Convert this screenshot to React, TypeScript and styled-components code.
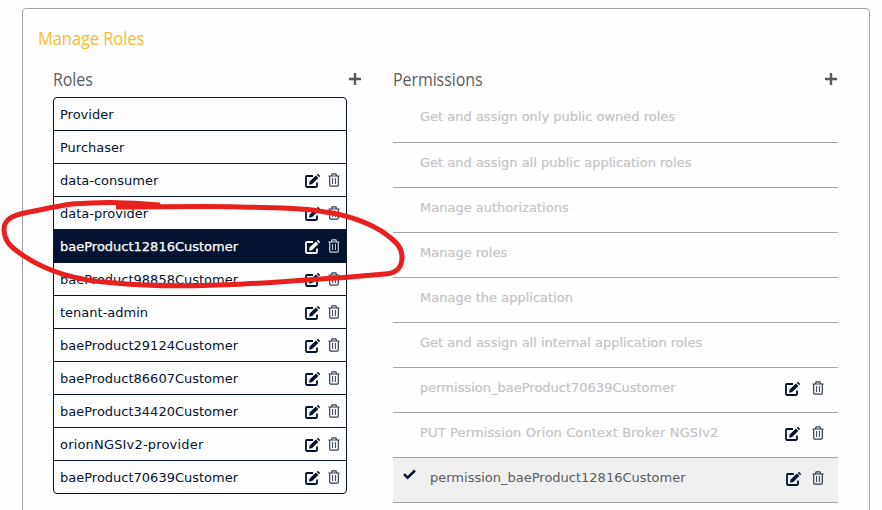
import React from "react";
import styled, { createGlobalStyle, css } from "styled-components";

const GlobalStyle = createGlobalStyle`
  html, body { margin: 0; height: 100%; overflow: hidden; background: #fff; }
  * { box-sizing: border-box; }
`;

const Page = styled.div`
  position: relative;
  height: 510px;
  overflow: hidden;
  padding: 8px 12px 0 22px;
  background: #fefefe;
  font-family: "DejaVu Sans", Verdana, sans-serif;
  font-size: 13px;
`;

const Panel = styled.main`
  height: 560px;
  border: 1px solid #a5a5a5;
  border-radius: 4px;
  padding: 17px 31px 0 15px;
`;

const headingFont = css`
  margin: 0;
  font: 400 18px/24px "Open Sans", sans-serif;
  letter-spacing: -0.1px;
  transform-origin: left center;
`;

const Title = styled.h1`
  ${headingFont}
  height: 24px;
  color: #fdb92a;
  transform: scaleX(0.918);
`;

const Columns = styled.div`
  display: grid;
  grid-template-columns: 294px 445px;
  column-gap: 46px;
  padding: 17px 0 0 15px;
`;

const ColumnHeader = styled.header<{ $overhang?: number }>`
  display: flex;
  justify-content: space-between;
  align-items: center;
  height: 24px;
  margin-right: ${(p) => -(p.$overhang ?? 0)}px;
`;

const Heading = styled.h2`
  ${headingFont}
  color: #5b5b5f;
  transform: scaleX(0.89);
`;

const IconButton = styled.button`
  display: block;
  padding: 0;
  border: 0;
  background: none;
  color: inherit;
  line-height: 0;
`;

const AddButton = styled(IconButton)`
  color: #57575f;
  margin-right: 1px;
`;

const RoleList = styled.ul`
  list-style: none;
  margin: 6px 0 0;
  padding: 0;
  border: 1px solid #04132f;
  border-radius: 4px;
  overflow: hidden;
`;

const RoleRow = styled.li<{ $selected?: boolean }>`
  display: flex;
  align-items: center;
  justify-content: space-between;
  height: 33px;
  padding: 0 6px 0 6px;
  border-bottom: 1px solid #04132f;
  color: #04132f;
  &:last-child { border-bottom: 0; height: 32px; }
  ${(p) => p.$selected && css`
    background: #04132f;
    color: #fff;
    -webkit-text-stroke: 0.25px #fff;
  `}
`;

const Label = styled.span<{ $tracking?: number }>`
  white-space: nowrap;
  letter-spacing: ${(p) => p.$tracking ?? 0}px;
`;

const Actions = styled.span<{ $gap: number }>`
  display: flex;
  align-items: center;
  gap: ${(p) => p.$gap}px;
  color: inherit;
`;

const PermissionList = styled.ul`
  list-style: none;
  margin: 4px 0 0;
  padding: 0;
`;

const PermissionRow = styled.li<{ $checked?: boolean }>`
  display: flex;
  justify-content: space-between;
  height: 45px;
  padding: 10px 14px 0 27px;
  line-height: 20px;
  border-bottom: 1px solid #a5a5a5;
  color: #c4c4c6;
  -webkit-text-stroke: 0.2px currentColor;
  &:first-child { height: 48px; padding-top: 12px; }
  ${(p) => p.$checked && css`
    background: #f0f0f0;
    color: #5b5b5f;
    padding-left: 10px;
    -webkit-text-stroke: 0;
  `}
  ${Actions} { height: 20px; color: #04132f; }
`;

const PermissionName = styled.span`
  display: flex;
  gap: 14px;
  svg { color: #04132f; margin-top: 1px; }
`;

const Annotation = styled.svg`
  position: absolute;
  left: 0;
  top: 0;
  pointer-events: none;
`;

const PlusIcon = () => (
  <svg width="12" height="12" viewBox="0 0 12 12" fill="currentColor">
    <path d="M4.8 0h2.4v4.8H12v2.4H7.2V12H4.8V7.2H0V4.8h4.8z" />
  </svg>
);

const EditIcon = () => (
  <svg width="15" height="15" viewBox="0 -1 15 15">
    <path d="M8 2H1.9Q1 2 1 2.9v9.2q0 .9.9.9h9.2q.9 0 .9-.9V8.6" fill="none" stroke="currentColor" strokeWidth="1.8" />
    <path d="M10.9 1.4l2.5 2.5-6.2 6.2-3.1.6.5-3.2zM11.8.9l.6-.6q.5-.5 1 0L14.7 1.6q.5.5 0 1l-.6.6z" fill="currentColor" />
  </svg>
);

const TrashIcon = () => (
  <svg width="12" height="14" viewBox="0 0 12 14" fill="none" stroke="currentColor" strokeOpacity="0.82">
    <path d="M.4 3h11.2M3.5 2.7L4.1.9h3.8l.6 1.8M1.7 3.3v8.8q0 1 1 1h6.6q1 0 1-1V3.3" strokeWidth="1.2" />
    <path d="M4.6 5v6M7.4 5v6" strokeWidth="1" />
  </svg>
);

const CheckIcon = () => (
  <svg width="13" height="11" viewBox="0 0 13 11" fill="none" stroke="currentColor" strokeWidth="2.5">
    <path d="M1 5.2l3.6 3.5L12 1.5" />
  </svg>
);

const RowActions = ({ gap }: { gap: number }) => (
  <Actions $gap={gap}>
    <IconButton aria-label="Edit"><EditIcon /></IconButton>
    <IconButton aria-label="Delete"><TrashIcon /></IconButton>
  </Actions>
);

interface Role {
  name: string;
  fixed?: boolean;
  selected?: boolean;
  tracking?: number;
}

interface Permission {
  name: string;
  editable?: boolean;
  checked?: boolean;
  tracking?: number;
}

const roles: Role[] = [
  { name: "Provider", fixed: true },
  { name: "Purchaser", fixed: true },
  { name: "data-consumer" },
  { name: "data-provider" },
  { name: "baeProduct12816Customer", selected: true },
  { name: "baeProduct98858Customer" },
  { name: "tenant-admin" },
  { name: "baeProduct29124Customer" },
  { name: "baeProduct86607Customer" },
  { name: "baeProduct34420Customer" },
  { name: "orionNGSIv2-provider", tracking: 0.18 },
  { name: "baeProduct70639Customer" },
];

const permissions: Permission[] = [
  { name: "Get and assign only public owned roles" },
  { name: "Get and assign all public application roles" },
  { name: "Manage authorizations" },
  { name: "Manage roles" },
  { name: "Manage the application" },
  { name: "Get and assign all internal application roles" },
  { name: "permission_baeProduct70639Customer", editable: true },
  { name: "PUT Permission Orion Context Broker NGSIv2", editable: true, tracking: 0.14 },
  { name: "permission_baeProduct12816Customer", editable: true, checked: true },
];

export default function App() {
  return (
    <>
      <GlobalStyle />
      <Page>
        <Panel>
          <Title>Manage Roles</Title>
          <Columns>
            <section>
              <ColumnHeader $overhang={15}>
                <Heading>Roles</Heading>
                <AddButton aria-label="Add role"><PlusIcon /></AddButton>
              </ColumnHeader>
              <RoleList>
                {roles.map((role) => (
                  <RoleRow key={role.name} $selected={role.selected}>
                    <Label $tracking={role.tracking}>{role.name}</Label>
                    {!role.fixed && <RowActions gap={8} />}
                  </RoleRow>
                ))}
              </RoleList>
            </section>
            <section>
              <ColumnHeader>
                <Heading>Permissions</Heading>
                <AddButton aria-label="Add permission"><PlusIcon /></AddButton>
              </ColumnHeader>
              <PermissionList>
                {permissions.map((item) => (
                  <PermissionRow key={item.name} $checked={item.checked}>
                    <PermissionName>
                      {item.checked && <CheckIcon />}
                      <Label $tracking={item.tracking}>{item.name}</Label>
                    </PermissionName>
                    {item.editable && <RowActions gap={item.checked ? 11 : 12} />}
                  </PermissionRow>
                ))}
              </PermissionList>
            </section>
          </Columns>
        </Panel>
        <Annotation width="420" height="300" viewBox="0 0 420 300" fill="none" stroke="#e8201e" strokeWidth="5" strokeLinecap="butt" strokeLinejoin="round">
          <path d="M160 205C130 202 96 202 72 204C57 206 45 209 29 212C13 215 4 219 4 229C4 242 12 248 24 256C48 272 76 281 115 283C155 287 205 286 244 284C285 282 319 279 350 277L385 274C400 273 402 264 402 257C402 247 396 242 387 235C370 222 343 214 325 212C300 207 273 208 240 207C205 206 165 207 116 207" />
        </Annotation>
      </Page>
    </>
  );
}
